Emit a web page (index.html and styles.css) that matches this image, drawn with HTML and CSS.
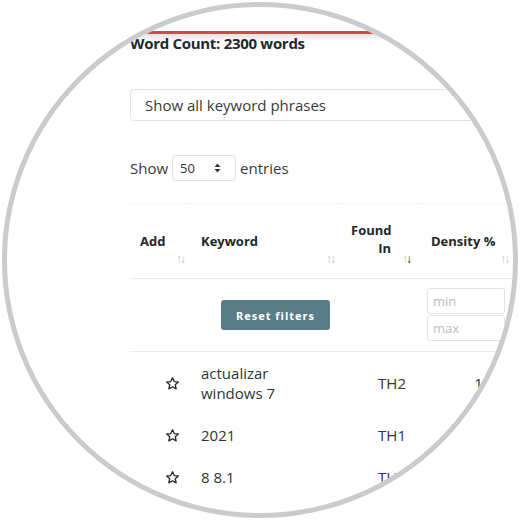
FILE: index.html
```html
<!DOCTYPE html>
<html>
<head>
<meta charset="utf-8">
<link rel="stylesheet" href="styles.css">
</head>
<body>
<div class="lens">
  <div class="banner">
    <div class="title">Word Count: 2300 words</div>
  </div>
  <div class="content">
    <div class="phrase-select">Show all keyword phrases</div>
    <div class="length">
      <span>Show</span>
      <span class="len-select"><span>50</span>
        <svg width="7" height="10" viewBox="0 0 7 10"><path d="M3.5 0.5 L6.5 4 L0.5 4 Z M3.5 9.5 L6.5 6 L0.5 6 Z" fill="#333"/></svg>
      </span>
      <span>entries</span>
    </div>
    <table class="kw">
      <colgroup>
        <col class="c-add"><col class="c-kw"><col class="c-found"><col class="c-dens"><col class="c-more">
      </colgroup>
      <thead>
        <tr class="head">
          <th>Add<span class="sort">↑↓</span></th>
          <th>Keyword<span class="sort">↑↓</span></th>
          <th class="num"><span class="two">Found</span><span class="two">In</span><span class="sort">↑<b>↓</b></span></th>
          <th class="dens">Density %<span class="sort">↑↓</span></th>
          <th></th>
        </tr>
        <tr class="filters">
          <td colspan="3"><button class="reset">Reset filters</button></td>
          <td class="range"><input placeholder="min"><input placeholder="max"></td>
          <td></td>
        </tr>
      </thead>
      <tbody>
        <tr>
          <td class="star"><svg width="15" height="15" viewBox="0 0 24 24"><path d="M12 2.8 L14.8 8.9 L21.3 9.6 L16.4 14 L17.8 20.6 L12 17.2 L6.2 20.6 L7.6 14 L2.7 9.6 L9.2 8.9 Z" fill="none" stroke="#2b2b2b" stroke-width="2.2" stroke-linejoin="round"/></svg></td>
          <td>actualizar<br>windows 7</td>
          <td class="num">TH2</td>
          <td class="num">1.22</td>
          <td></td>
        </tr>
        <tr>
          <td class="star"><svg width="15" height="15" viewBox="0 0 24 24"><path d="M12 2.8 L14.8 8.9 L21.3 9.6 L16.4 14 L17.8 20.6 L12 17.2 L6.2 20.6 L7.6 14 L2.7 9.6 L9.2 8.9 Z" fill="none" stroke="#2b2b2b" stroke-width="2.2" stroke-linejoin="round"/></svg></td>
          <td>2021</td>
          <td class="num">TH1</td>
          <td class="num">0.87</td>
          <td></td>
        </tr>
        <tr>
          <td class="star"><svg width="15" height="15" viewBox="0 0 24 24"><path d="M12 2.8 L14.8 8.9 L21.3 9.6 L16.4 14 L17.8 20.6 L12 17.2 L6.2 20.6 L7.6 14 L2.7 9.6 L9.2 8.9 Z" fill="none" stroke="#2b2b2b" stroke-width="2.2" stroke-linejoin="round"/></svg></td>
          <td>8 8.1</td>
          <td class="num">TH1</td>
          <td class="num">0.61</td>
          <td></td>
        </tr>
      </tbody>
    </table>
  </div>
</div>
</body>
</html>
```
FILE: styles.css
```css
html, body {
  margin: 0;
  padding: 0;
  background: #fff;
}
body {
  font-family: "Open Sans", "Liberation Sans", sans-serif;
  color: #333;
}
.lens {
  box-sizing: border-box;
  width: 516px;
  height: 516px;
  margin: 2px 0 0 2px;
  border: 5px solid #cbcbcb;
  border-radius: 50%;
  overflow: hidden;
  background: #fff;
}
.banner {
  margin-top: 24px;
  border-top: 3px solid #cf4b4b;
  background: linear-gradient(#e2e2e2, #ffffff 7px);
  padding-left: 123px;
}
.title {
  font-size: 15px;
  font-weight: 700;
  line-height: 18px;
  letter-spacing: -0.3px;
  color: #222831;
}
.content {
  padding-left: 123px;
}
.phrase-select {
  box-sizing: border-box;
  margin-top: 37px;
  width: 380px;
  height: 32px;
  border: 1px solid #e3e3e3;
  border-radius: 4px;
  padding-left: 14px;
  font-size: 15px;
  line-height: 30px;
  color: #3a3a3a;
}
.length {
  margin-top: 34px;
  display: flex;
  align-items: center;
  gap: 4px;
  font-size: 15px;
  color: #3a3a3a;
  height: 26px;
}
.len-select {
  box-sizing: border-box;
  width: 64px;
  height: 26px;
  border: 1px solid #e3e3e3;
  border-radius: 4px;
  display: flex;
  align-items: center;
  justify-content: space-between;
  padding: 0 14px 0 7px;
  font-size: 13px;
  color: #333;
}
.kw {
  margin-top: 22px;
  border-collapse: collapse;
  table-layout: fixed;
  width: 500px;
  border-top: 1px dotted #f1f1f1;
}
.c-add { width: 61px; }
.c-kw { width: 150px; }
.c-found { width: 76px; }
.c-dens { width: 98px; }
.c-more { width: 115px; }
.head th {
  position: relative;
  height: 74px;
  padding: 0 10px;
  text-align: left;
  vertical-align: middle;
  font-size: 13px;
  font-weight: 700;
  line-height: 15px;
  color: #23272b;
  border-bottom: 1px solid #ececec;
}
.head th.num {
  text-align: right;
  padding-right: 26px;
}
.two {
  display: block;
  line-height: 18px;
  position: relative;
  top: -2px;
}
.head th.dens {
  padding-left: 14px;
}
.sort {
  position: absolute;
  right: 7px;
  bottom: 15px;
  font-size: 12px;
  line-height: 9px;
  font-weight: 400;
  letter-spacing: -2px;
  color: #c2c2c2;
}
.sort b {
  font-weight: 700;
  color: #222;
}
.filters td {
  height: 72px;
  padding: 0;
  border-bottom: 1px solid #ececec;
  text-align: center;
  vertical-align: middle;
}
.reset {
  width: 109px;
  height: 30px;
  border: none;
  border-radius: 3px;
  background: #5a7b88;
  color: #fff;
  font-family: "Open Sans", "Liberation Sans", sans-serif;
  font-weight: 700;
  font-size: 11px;
  letter-spacing: 1px;
  margin-left: 4px;
}
.filters td.range {
  text-align: left;
  padding-left: 10px;
}
.range input {
  display: block;
  box-sizing: border-box;
  width: 78px;
  height: 26px;
  margin: 0 0 1px 0;
  border: 1px solid #e3e3e3;
  border-radius: 3px;
  padding: 0 0 0 5px;
  font-family: "Open Sans", "Liberation Sans", sans-serif;
  font-size: 13px;
  color: #333;
}
.range input::placeholder {
  color: #bdbdbd;
}
tbody td {
  padding: 11px 10px;
  font-size: 15px;
  line-height: 20px;
  color: #333;
  vertical-align: middle;
}
tbody td.star {
  padding-left: 35px;
  padding-right: 0;
}
tbody td.star svg {
  display: block;
}
tbody td.num {
  text-align: right;
  padding-right: 11px;
}
```
